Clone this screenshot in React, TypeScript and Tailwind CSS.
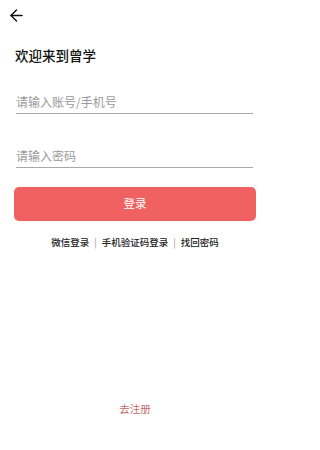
import { ArrowLeft } from 'lucide-react';

const font = { fontFamily: '"Noto Sans CJK SC", "Noto Sans", sans-serif' };

export default function App() {
  return (
    <div className="w-[270px] h-[450px] bg-white flex flex-col" style={font}>
      <header className="h-[30px] flex items-center pl-[7px]">
        <ArrowLeft className="w-[19px] h-[19px] text-[#111]" strokeWidth={1.8} />
      </header>

      <h1 className="mt-[15px] pl-[15px] text-[13.5px] leading-[20px] font-medium text-[#111]">欢迎来到曾学</h1>

      <div className="px-[16px] mt-[25px] flex flex-col gap-[30px] pr-[17px]">
        <div className="h-[24px] border-b border-[#a8a8a8] flex items-center">
          <input
            className="w-full bg-transparent outline-none text-[12px] text-[#333] placeholder-[#9a9a9a]"
            placeholder="请输入账号/手机号"
          />
        </div>
        <div className="h-[24px] border-b border-[#a8a8a8] flex items-center">
          <input
            type="password"
            className="w-full bg-transparent outline-none text-[12px] text-[#333] placeholder-[#9a9a9a]"
            placeholder="请输入密码"
          />
        </div>
      </div>

      <div className="px-[14px] mt-[19px]">
        <button className="w-full h-[34px] rounded-[5px] bg-[#f06262] text-white text-[11.5px] flex items-center justify-center">
          登录
        </button>
      </div>

      <div className="mt-[14px] flex items-center justify-center gap-[5px] text-[9.5px] font-medium text-[#222]">
        <span>微信登录</span>
        <span className="text-[#999] font-normal">|</span>
        <span>手机验证码登录</span>
        <span className="text-[#999] font-normal">|</span>
        <span>找回密码</span>
      </div>

      <div className="flex-1" />

      <div className="flex justify-center mb-[33px]">
        <span className="text-[10.5px] text-[#c56b6b]">去注册</span>
      </div>
    </div>
  );
}
